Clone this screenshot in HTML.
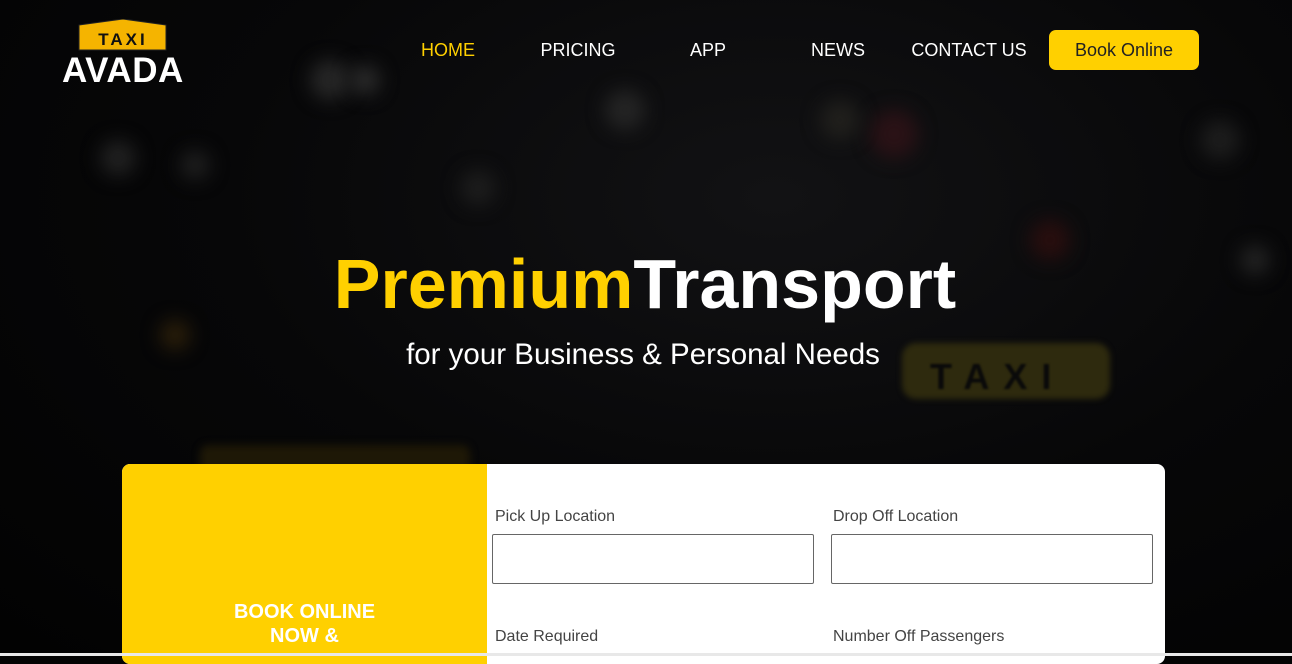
<!DOCTYPE html>
<html><head><style>
*{margin:0;padding:0;box-sizing:border-box}
body{width:1292px;height:656px;overflow:hidden;background:#030303;font-family:"Liberation Sans",Arial,sans-serif;position:relative}
.bg{position:absolute;inset:0;background:radial-gradient(ellipse at 60% 30%,#121214 0%,#070708 50%,#020202 100%)}
.b{position:absolute;border-radius:50%;filter:blur(9px)}
.nav a{position:absolute;top:40px;color:#fff;font-size:18px;text-decoration:none;transform:translateX(-50%)}
</style></head><body>
<div class="bg"></div>
<div class="b" style="left:310px;top:60px;width:40px;height:40px;background:#262626"></div>
<div class="b" style="left:350px;top:65px;width:30px;height:30px;background:#2a2a2a"></div>
<div class="b" style="left:605px;top:90px;width:40px;height:40px;background:#242424"></div>
<div class="b" style="left:100px;top:140px;width:36px;height:36px;background:#202020"></div>
<div class="b" style="left:180px;top:150px;width:30px;height:30px;background:#1e1e1e"></div>
<div class="b" style="left:870px;top:110px;width:48px;height:48px;background:#2a1216"></div>
<div class="b" style="left:820px;top:100px;width:40px;height:40px;background:#201f1c"></div>
<div class="b" style="left:1030px;top:220px;width:40px;height:40px;background:#280e0e"></div>
<div class="b" style="left:1240px;top:245px;width:30px;height:30px;background:#222"></div>
<div class="b" style="left:160px;top:320px;width:30px;height:30px;background:#2a1e0a"></div>
<div class="b" style="left:1200px;top:120px;width:40px;height:40px;background:#1c1c1c"></div>
<div class="b" style="left:460px;top:170px;width:36px;height:36px;background:#1c1c1c"></div>
<div style="position:absolute;left:902px;top:343px;width:208px;height:56px;border-radius:14px;background:#2e2a0e;filter:blur(3px)"></div>
<div style="position:absolute;left:930px;top:356px;color:#0a0a0a;font-weight:bold;font-size:36px;letter-spacing:14px;filter:blur(1px)">TAXI</div>
<div style="position:absolute;left:200px;top:445px;width:270px;height:30px;border-radius:8px;background:#1e1806;filter:blur(4px)"></div>
<svg style="position:absolute;left:78px;top:19px" width="90" height="32"><path d="M1 6 L45 0 L88 6 L88 31 L1 31Z" fill="#f5b400" stroke="#222" stroke-width="1"/><text x="45" y="26" text-anchor="middle" font-family="Liberation Sans" font-weight="bold" font-size="17" fill="#111" letter-spacing="3">TAXI</text></svg>
<div style="position:absolute;left:62px;top:51px;color:#fff;font-weight:bold;font-size:35px;letter-spacing:0.5px">AVADA</div>
<div class="nav">
<a style="left:448px;color:#ffd000">HOME</a><a style="left:578px">PRICING</a><a style="left:708px">APP</a><a style="left:838px">NEWS</a><a style="left:969px">CONTACT US</a>
</div>
<div style="position:absolute;left:1049px;top:30px;width:150px;height:40px;border-radius:7px;background:#ffd000;color:#222;font-size:18px;text-align:center;line-height:40px">Book Online</div>
<div style="position:absolute;left:0;width:1290px;top:244px;text-align:center;font-weight:bold;font-size:70px;color:#fff"><span style="color:#ffd000">Premium</span>Transport</div>
<div style="position:absolute;left:0;width:1286px;top:338px;text-align:center;font-size:29.5px;color:#fff">for your Business &amp; Personal Needs</div>
<div style="position:absolute;left:122px;top:464px;width:1043px;height:200px;background:#fff;border-radius:8px;overflow:hidden">
<div style="position:absolute;left:0;top:0;width:365px;height:200px;background:#ffd000"></div>
<div style="position:absolute;left:0;width:365px;top:136px;text-align:center;color:#fff;font-weight:bold;font-size:20px;line-height:24px">BOOK ONLINE<br>NOW &amp;</div>
<div style="position:absolute;left:373px;top:44px;font-size:16px;color:#444">Pick Up Location</div>
<div style="position:absolute;left:711px;top:44px;font-size:16px;color:#444">Drop Off Location</div>
<div style="position:absolute;left:370px;top:70px;width:322px;height:50px;border:1px solid #666;border-radius:2px"></div>
<div style="position:absolute;left:709px;top:70px;width:322px;height:50px;border:1px solid #666;border-radius:2px"></div>
<div style="position:absolute;left:373px;top:164px;font-size:16px;color:#444">Date Required</div>
<div style="position:absolute;left:711px;top:164px;font-size:16px;color:#444">Number Off Passengers</div>
</div>
<div style="position:absolute;left:0;top:653px;width:1292px;height:3px;background:#e8e8e8"></div>
</body></html>
